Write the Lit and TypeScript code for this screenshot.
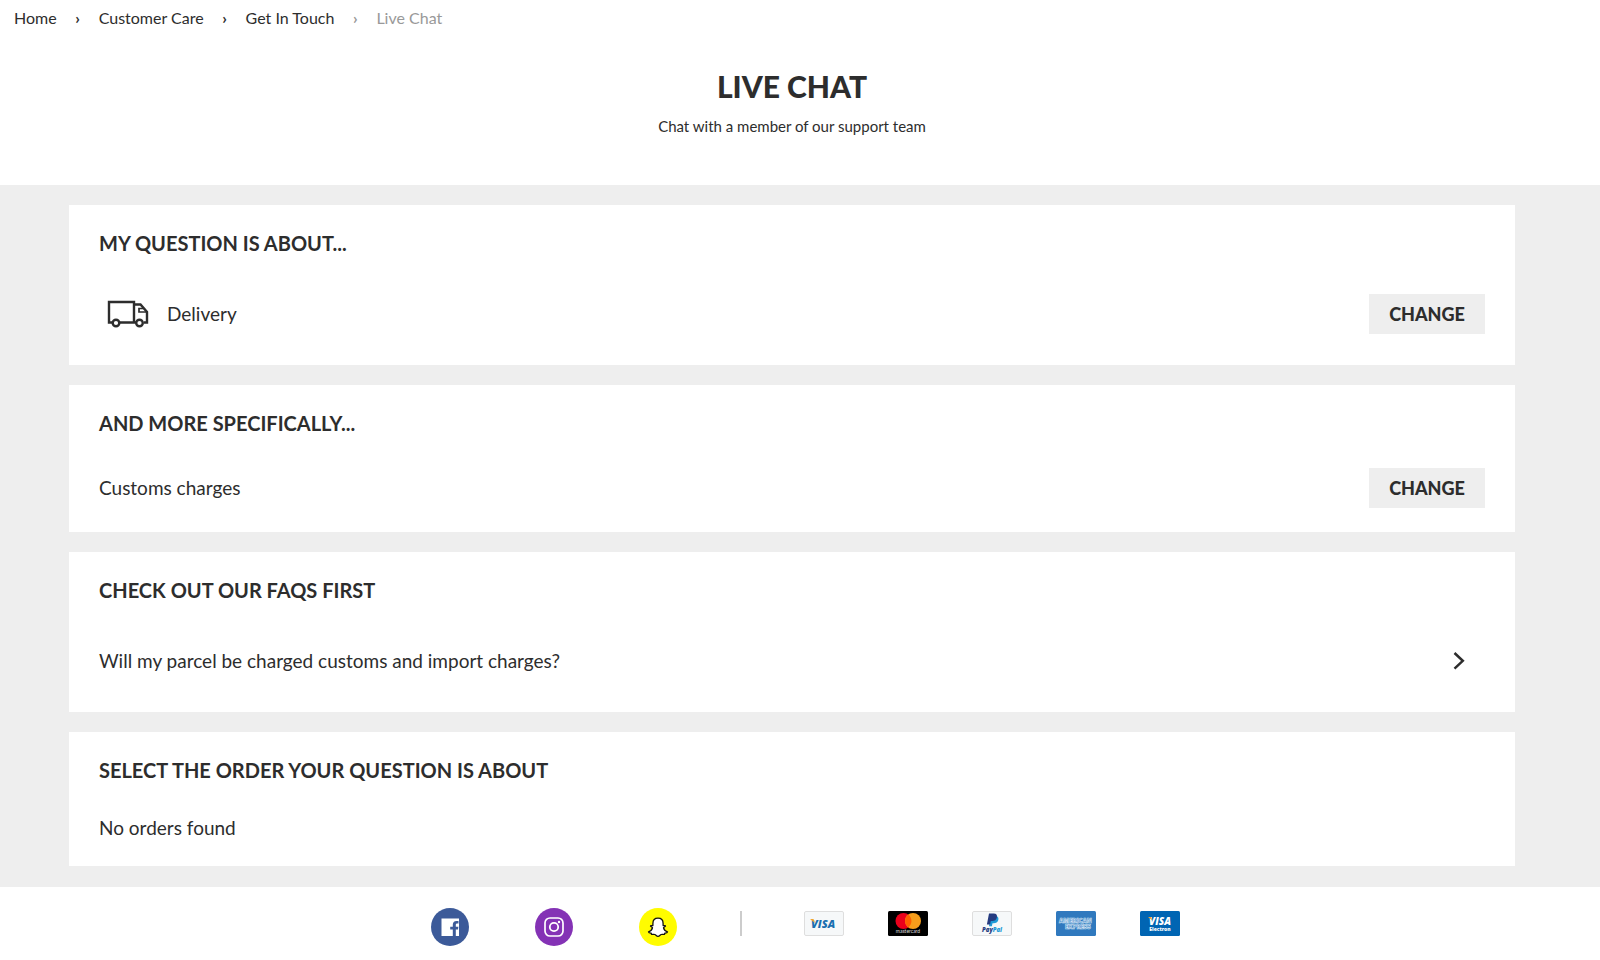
import { LitElement, html, css, svg } from "lit";
import { customElement, property } from "lit/decorators.js";

const truck = svg`<svg class="truck" viewBox="0 0 42 28" width="42" height="28" fill="none" stroke="#2d2d2d" stroke-width="2.400" aria-hidden="true">
  <path d="M5 22.500H2V2h25v20.500M13 22.500h16M27 4.500h6.500L40 12v10.500h-3"/>
  <path d="M39 12h-7V8.500h4.500" stroke-width="1.700"/>
  <circle cx="9" cy="23" r="3.300"/><circle cx="32.500" cy="23" r="3.300"/>
</svg>`;

const chevron = svg`<svg viewBox="0 0 12 18" width="12" height="18" fill="none" stroke="#2d2d2d" stroke-width="2.500" aria-hidden="true"><path d="M1.500 1 9.800 8.800 1.500 16.600"/></svg>`;

const facebook = svg`<svg viewBox="0 0 38 38" width="38" height="38" aria-hidden="true">
  <circle cx="19" cy="19" r="19" fill="#3c5a99"/>
  <path fill="#fff" d="M10.500 10.500h17.500v17.500h-3.200v-6.500h2.200l.4-2.800h-2.600v-1.600c0-1 .4-1.500 1.400-1.500h1.300v-2.500c-.4-.1-1.100-.2-2-.2-2.500 0-3.700 1.400-3.700 3.900v1.900h-2.600v2.800h2.600v6.500h-11.300z"/>
</svg>`;

const instagram = svg`<svg viewBox="0 0 38 38" width="38" height="38" fill="none" stroke="#fff" aria-hidden="true">
  <circle cx="19" cy="19" r="19" fill="#8432b5" stroke="none"/>
  <rect x="10" y="10" width="18" height="18" rx="5" stroke-width="1.700"/>
  <circle cx="19" cy="19" r="4.200" stroke-width="1.800"/>
  <circle cx="24" cy="14" r="1.200" fill="#fff" stroke="none"/>
</svg>`;

const snapchat = svg`<svg viewBox="0 0 38 38" width="38" height="38" aria-hidden="true">
  <circle cx="19" cy="19" r="19" fill="#fffc00"/>
  <path fill="#fff" stroke="#111" stroke-width="1.300" stroke-linejoin="round" d="M19 10.200c3.400 0 5.100 2.300 5.100 5.200v2.200c.9.400 1.700-.4 2.300.2.500.7-1.500 1.300-1.900 2 .6 2.100 2 3.500 4 4-.2 1-1.600 1.200-2.600 1.400-.3.500-.2 1-.6 1.200-.9.200-2-.3-3.100.1-1.100.5-1.700 1.900-3.200 1.900s-2.100-1.400-3.200-1.900c-1.100-.4-2.200.1-3.100-.1-.4-.2-.3-.7-.6-1.200-1-.2-2.400-.4-2.600-1.400 2-.5 3.400-1.900 4-4-.4-.7-2.400-1.300-1.900-2 .6-.6 1.400.2 2.300-.2v-2.200c0-2.900 1.700-5.200 5.100-5.200z"/>
</svg>`;

const visa = svg`<svg viewBox="0 0 40 25" width="40" height="25" role="img" aria-label="Visa">
  <rect x=".5" y=".5" width="39" height="24" rx="1.500" fill="#f6f8f9" stroke="#dedede"/>
  <text x="7" y="16.500" font-size="11" font-weight="800" font-style="italic" fill="#1a6fb0" font-family="Open Sans, sans-serif">VISA</text>
  <path d="M6 8h3.500l1.500 4z" fill="#f2a52e"/>
</svg>`;

const mastercard = svg`<svg viewBox="0 0 40 25" width="40" height="25" role="img" aria-label="Mastercard">
  <rect width="40" height="25" rx="1.500" fill="#000"/>
  <circle cx="15.500" cy="10" r="8" fill="#eb001b"/><circle cx="25" cy="10" r="8" fill="#f79e1b"/>
  <path d="M20.250 3.600a8 8 0 0 1 0 12.800 8 8 0 0 1 0-12.800z" fill="#ff5f00"/>
  <text x="20" y="22" font-size="5" text-anchor="middle" fill="#ddd" font-family="Lato, sans-serif">mastercard</text>
</svg>`;

const paypal = svg`<svg viewBox="0 0 40 25" width="40" height="25" role="img" aria-label="PayPal">
  <rect x=".5" y=".5" width="39" height="24" rx="1.500" fill="#f6f8f9" stroke="#dedede"/>
  <path d="M18.500 5h5c2.500 0 3.400 1.700 2.800 4-.6 2.400-2.300 3.300-4.600 3.300h-1.200l-.6 2.900h-2.900z" fill="#1f9bd7"/>
  <path d="M17 2.500h4.700c2.700 0 3.700 1.600 3.200 3.900-.5 2.500-2.300 3.500-4.700 3.500h-1.400l-.7 3.600h-3.200z" fill="#253b80"/>
  <text x="20" y="21" font-size="6" font-weight="800" font-style="italic" text-anchor="middle" fill="#253b80" font-family="Open Sans, sans-serif">Pay<tspan fill="#1f9bd7">Pal</tspan></text>
</svg>`;

const amex = svg`<svg viewBox="0 0 40 25" width="40" height="25" role="img" aria-label="American Express">
  <rect width="40" height="25" rx="1.500" fill="#3079be"/>
  <g fill="#3079be" stroke="#cfe2f3" stroke-width=".6" font-family="Open Sans, sans-serif" font-weight="800" font-size="6">
    <text x="3" y="12">AMERICAN</text><text x="9" y="18">EXPRESS</text>
  </g>
</svg>`;

const visaElectron = svg`<svg viewBox="0 0 40 25" width="40" height="25" role="img" aria-label="Visa Electron">
  <rect width="40" height="25" rx="1.500" fill="#0065b3"/>
  <text x="9" y="14" font-size="10" font-weight="800" font-style="italic" fill="#fff" font-family="Open Sans, sans-serif">VISA</text>
  <path d="M8 6h3l1.500 3.500z" fill="#f2a52e"/>
  <text x="20" y="19.500" font-size="5" font-weight="800" text-anchor="middle" fill="#fff" font-family="Open Sans, sans-serif">Electron</text>
</svg>`;

@customElement("chat-card")
class ChatCard extends LitElement {
  @property() heading = "";
  @property({ reflect: true }) size = "small";

  static styles = css`
    :host { display: block; background: #fff; padding: 28px 30px 0; }
    .heading { margin: 0 0 10px; font-size: 20px; line-height: 20px; font-weight: 700; text-transform: uppercase; }
    .body { display: flex; align-items: center; justify-content: space-between; min-height: 76px; font-size: 19px; line-height: 24px; }
    :host([size="medium"]) .body { min-height: 89px; }
    :host([size="large"]) .body { min-height: 102px; }
  `;

  render() {
    return html`<section>
      <h2 class="heading">${this.heading}</h2>
      <div class="body"><slot></slot></div>
    </section>`;
  }
}

@customElement("app-root")
class AppRoot extends LitElement {
  static styles = css`
    :host { display: block; min-height: 100vh; background: #fff; color: #2d2d2d; font-family: Lato, "Liberation Sans", sans-serif; }
    a { color: inherit; text-decoration: none; }
    .crumbs { padding: 8px 14px; font-size: 16px; line-height: 20px; }
    .crumbs ol { display: flex; margin: 0; padding: 0; list-style: none; }
    .crumb + .crumb::before { content: "›"; display: inline-block; width: 42px; text-align: center; font-weight: 700; }
    .crumb.current { color: #999; }
    .intro { padding: 32px 16px 49px 0; text-align: center; }
    .title { margin: 0; font-size: 30px; line-height: 36px; font-weight: 900; }
    .lead { margin: 12px 0 0; font-size: 15px; line-height: 20px; }
    .panel { display: grid; gap: 20px; padding: 20px 85px 21px 69px; background: #eee; }
    .topic { display: flex; align-items: center; gap: 18px; padding-left: 8px; }
    .change { width: 116px; height: 40px; padding: 0; border: 0; background: #eee; color: inherit; font: 900 18px/40px Lato, sans-serif; text-transform: uppercase; cursor: pointer; }
    .faq { flex: 1; display: flex; align-items: center; justify-content: space-between; padding-right: 20px; }
    .footer { display: flex; justify-content: center; align-items: flex-start; padding: 21px 16px 14px 27px; }
    .social { display: flex; gap: 66px; }
    .social a, .payments svg, .social svg { display: block; }
    .payments { display: flex; gap: 44px; margin: 3px 0 0 63px; padding-left: 62px; border-left: 2px solid #ccc; }
  `;

  render() {
    const crumbs = ["Home", "Customer Care", "Get In Touch"];
    return html`
      <nav class="crumbs" aria-label="Breadcrumb">
        <ol>
          ${crumbs.map((c) => html`<li class="crumb"><a href="#">${c}</a></li>`)}
          <li class="crumb current" aria-current="page">Live Chat</li>
        </ol>
      </nav>
      <header class="intro">
        <h1 class="title">LIVE CHAT</h1>
        <p class="lead">Chat with a member of our support team</p>
      </header>
      <main class="panel">
        <chat-card heading="My question is about..." size="large">
          <span class="topic">${truck}<span>Delivery</span></span>
          <button class="change" type="button" aria-label="Change topic">Change</button>
        </chat-card>
        <chat-card heading="And more specifically..." size="medium">
          <span>Customs charges</span>
          <button class="change" type="button" aria-label="Change subject">Change</button>
        </chat-card>
        <chat-card heading="Check out our FAQs first" size="large">
          <a class="faq" href="#"><span>Will my parcel be charged customs and import charges?</span>${chevron}</a>
        </chat-card>
        <chat-card heading="Select the order your question is about">
          <span>No orders found</span>
        </chat-card>
      </main>
      <footer class="footer">
        <div class="social">
          <a href="#" aria-label="Facebook">${facebook}</a>
          <a href="#" aria-label="Instagram">${instagram}</a>
          <a href="#" aria-label="Snapchat">${snapchat}</a>
        </div>
        <div class="payments">${visa}${mastercard}${paypal}${amex}${visaElectron}</div>
      </footer>
    `;
  }
}
